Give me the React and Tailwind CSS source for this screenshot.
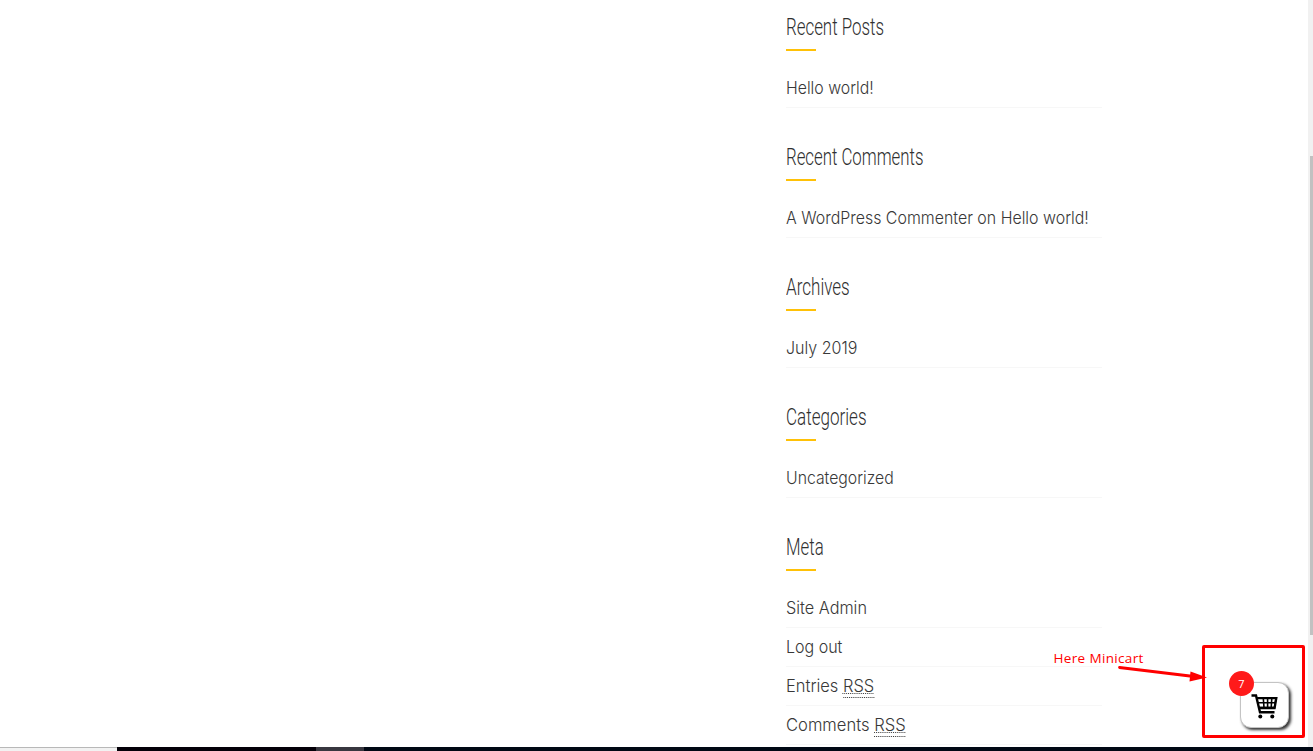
const rss = (
  <span className="inline-block h-[26px] border-b border-dotted border-[#333] leading-[27px] underline decoration-dotted decoration-1 underline-offset-1">
    RSS
  </span>
);

const widgets = [
  { title: 'Recent Posts', fit: 'scale-x-[0.703]', items: [{ text: 'Hello world!', fit: 'scale-x-[0.905]' }] },
  {
    title: 'Recent Comments',
    fit: 'scale-x-[0.7]',
    items: [{ text: 'A WordPress Commenter on Hello world!', fit: 'scale-x-[0.91]' }],
  },
  { title: 'Archives', fit: 'scale-x-[0.71]', items: [{ text: 'July 2019', fit: 'scale-x-[0.915]' }] },
  { title: 'Categories', fit: 'scale-x-[0.71]', items: [{ text: 'Uncategorized', fit: 'scale-x-[0.903]' }] },
  {
    title: 'Meta',
    fit: 'scale-x-[0.7]',
    items: [
      { text: 'Site Admin', fit: 'scale-x-[0.929]' },
      { text: 'Log out', fit: 'scale-x-[0.915]' },
      { text: 'Entries ', extra: rss, fit: 'scale-x-[0.94]' },
      { text: 'Comments ', extra: rss, fit: 'scale-x-[0.947]' },
    ],
  },
];

function Widget({ title, fit, items }) {
  return (
    <section>
      <h2 className={`w-max origin-left whitespace-nowrap font-['Roboto',sans-serif] text-[24px] font-light leading-[32px] text-[#303030] ${fit}`}>
        {title}
      </h2>
      <div className="mb-[18px] mt-[6px] h-[2px] w-[30px] bg-[#ffc107]" />
      <ul>
        {items.map((item) => (
          <li key={item.text} className="h-[39px] border-b border-[#f7f7f7]">
            <a className={`-ml-[0.5px] block w-max origin-left whitespace-pre font-['Inter',sans-serif] text-[17.5px] font-light leading-[38px] text-[#383838] ${item.fit}`}>
              {item.text}
              {item.extra}
            </a>
          </li>
        ))}
      </ul>
    </section>
  );
}

function Minicart() {
  return (
    <div className="absolute left-[1202px] top-[645px] h-[93px] w-[103px] rounded-[2px] border-[3px] border-[#ff0000]">
      <button className="absolute left-[35px] top-[34px] flex h-[46px] w-[49px] items-center justify-center rounded-[11px] border border-[#c4c4c4] bg-white shadow-[2px_2px_3px_#333]">
        <svg className="mt-[3px]" width="27" height="25" viewBox="0 0 27 25" fill="none" stroke="#000">
          <path d="M.5 1.500H5L9 18.200H23.500" strokeWidth="2.400" />
          <path d="M6 4.200H25L23.500 13.500H8M7 8.800H24M12.300 4.200L13 13.500M16.600 4.200V13.500M20.800 4.200L20.200 13.500" strokeWidth="1.600" />
          <path d="M5.500 4.200H25.300L23.600 14H8" strokeWidth="2.300" />
          <circle cx="9.300" cy="22.500" r="2" fill="#000" stroke="none" />
          <circle cx="21.300" cy="22.500" r="2" fill="#000" stroke="none" />
        </svg>
      </button>
      <span className="absolute left-[24px] top-[23px] flex h-[25px] w-[25px] items-center justify-center rounded-full bg-[#ff1a1a] font-['Open_Sans',sans-serif] text-[11px] leading-none text-white">
        7
      </span>
    </div>
  );
}

export default function App() {
  return (
    <div className="relative flex h-[751px] w-[1313px] flex-col overflow-hidden bg-white">
      <div className="flex h-[747px] justify-between overflow-hidden">
        <aside className="ml-[786px] flex w-[316px] flex-col gap-[33px] pt-[11px]">
          {widgets.map((widget) => (
            <Widget key={widget.title} {...widget} />
          ))}
        </aside>
        <div className="w-[5px] bg-[#f1f1f1] pl-[2px] pt-[156px]">
          <div className="h-[479px] bg-[#c1c1c1]" />
        </div>
      </div>
      <footer className="flex h-[4px] bg-[#000814]">
        <div className="w-[117px] border-t border-[#b8b8b8] bg-[#f2f2f2]" />
        <div className="w-[199px] bg-[#030008]" />
        <div className="w-[48px] bg-[#38373f]" />
      </footer>

      <span className="absolute left-[1053.5px] top-[648px] whitespace-nowrap font-['Open_Sans',sans-serif] text-[13.5px] leading-[20px] tracking-[0.35px] text-[#ff0000]">
        Here Minicart
      </span>
      <Minicart />
      <svg className="absolute left-[1110px] top-[660px]" width="100" height="26" viewBox="0 0 100 26">
        <path d="M9.500 7.500L84 16.500" stroke="#f00" strokeWidth="2.800" strokeLinecap="round" />
        <path d="M80.500 11.500L97 17.500L79.500 21.500Z" fill="#f00" />
      </svg>
    </div>
  );
}
